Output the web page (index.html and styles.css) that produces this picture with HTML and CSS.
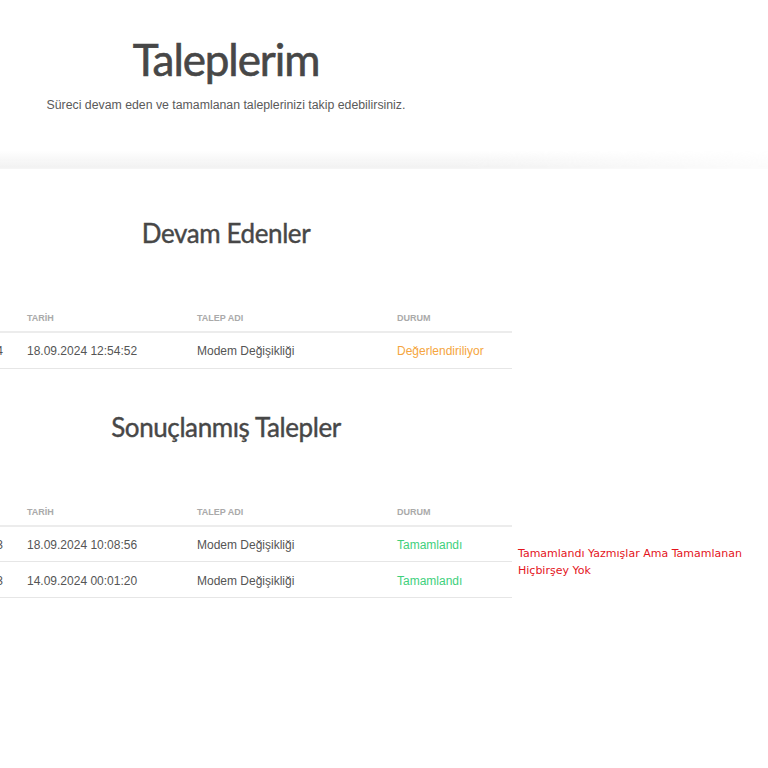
FILE: index.html
```html
<!DOCTYPE html>
<html lang="tr">
<head>
<meta charset="utf-8">
<title>Taleplerim</title>
<link rel="stylesheet" href="styles.css">
</head>
<body>
<header class="page-head">
  <div class="col">
    <h1 class="page-title">Taleplerim</h1>
    <p class="page-sub">Süreci devam eden ve tamamlanan taleplerinizi takip edebilirsiniz.</p>
  </div>
</header>
<div class="band"></div>
<main class="content">
  <section class="block block-first">
    <div class="col">
      <h2 class="section-title">Devam Edenler</h2>
    </div>
    <div class="table-row">
      <table class="req-table">
        <thead>
          <tr><th class="c-id"></th><th class="c-date">TARİH</th><th class="c-name">TALEP ADI</th><th class="c-state">DURUM</th></tr>
        </thead>
        <tbody>
          <tr><td class="c-id">2024</td><td class="c-date">18.09.2024 12:54:52</td><td class="c-name">Modem Değişikliği</td><td class="c-state pending">Değerlendiriliyor</td></tr>
        </tbody>
      </table>
    </div>
  </section>
  <section class="block">
    <div class="col">
      <h2 class="section-title">Sonuçlanmış Talepler</h2>
    </div>
    <div class="table-row">
      <table class="req-table">
        <thead>
          <tr><th class="c-id"></th><th class="c-date">TARİH</th><th class="c-name">TALEP ADI</th><th class="c-state">DURUM</th></tr>
        </thead>
        <tbody>
          <tr><td class="c-id">2023</td><td class="c-date">18.09.2024 10:08:56</td><td class="c-name">Modem Değişikliği</td><td class="c-state done">Tamamlandı</td></tr>
          <tr><td class="c-id">2023</td><td class="c-date">14.09.2024 00:01:20</td><td class="c-name">Modem Değişikliği</td><td class="c-state done">Tamamlandı</td></tr>
        </tbody>
      </table>
      <p class="note">Tamamlandı Yazmışlar Ama Tamamlanan Hiçbirşey Yok</p>
    </div>
  </section>
</main>
</body>
</html>
```
FILE: styles.css
```css
* { box-sizing: border-box; }
html, body { margin: 0; padding: 0; background: #fff; }
body {
  font-family: "Liberation Sans", Arial, sans-serif;
  color: #555;
  overflow: hidden;
  width: 768px;
  height: 768px;
}
.col {
  width: 452px;
  text-align: center;
}
.page-head {
  padding-top: 31px;
  height: 150px;
}
.page-title {
  margin: 0;
  font-family: Lato, "Noto Sans", sans-serif;
  font-weight: 400;
  font-size: 44px;
  line-height: 56px;
  color: #474747;
  letter-spacing: -1.1px;
  -webkit-text-stroke: 0.6px #474747;
}
.page-sub {
  margin: 10px 0 0;
  font-size: 12.3px;
  line-height: 16px;
  color: #5a5a5a;
}
.band {
  height: 19px;
  background: linear-gradient(to bottom, rgba(255,255,255,0) 0%, #f2f2f2 90%, #f6f6f6 100%);
  -webkit-mask-image: linear-gradient(to right, #000 0%, #000 60%, rgba(0,0,0,0.25) 100%);
  mask-image: linear-gradient(to right, #000 0%, #000 60%, rgba(0,0,0,0.25) 100%);
}
.content { padding-top: 47px; }
.block-first { margin-bottom: 41px; }
.section-title {
  margin: 0;
  font-family: Lato, "Noto Sans", sans-serif;
  font-weight: 400;
  font-size: 26px;
  line-height: 34px;
  color: #474747;
  letter-spacing: -0.4px;
  -webkit-text-stroke: 0.4px #474747;
}
.table-row {
  display: flex;
  align-items: flex-start;
  margin-top: 55px;
  margin-left: -60px;
}
.req-table {
  border-collapse: collapse;
  width: 572px;
  flex: none;
}
.req-table th {
  font-size: 9px;
  font-weight: 700;
  color: #aaa;
  text-align: left;
  height: 27px;
  padding: 0 8px;
  border-bottom: 2px solid #ececec;
}
.req-table td {
  font-size: 12px;
  color: #555;
  height: 36px;
  padding: 2px 8px 0;
  border-bottom: 1px solid #e6e6e6;
}
.req-table .c-id { width: 79px; text-align: right; padding-right: 16px; }
.req-table .c-date { width: 170px; }
.req-table .c-name { width: 200px; }
.req-table .c-state { width: 123px; }
.pending { color: #f5a540 !important; }
.done { color: #3ed07c !important; }
.note {
  margin: 46px 0 0 6px;
  font-family: "DejaVu Sans", sans-serif;
  font-size: 11px;
  line-height: 17px;
  color: #e4141c;
  width: 245px;
}
```
